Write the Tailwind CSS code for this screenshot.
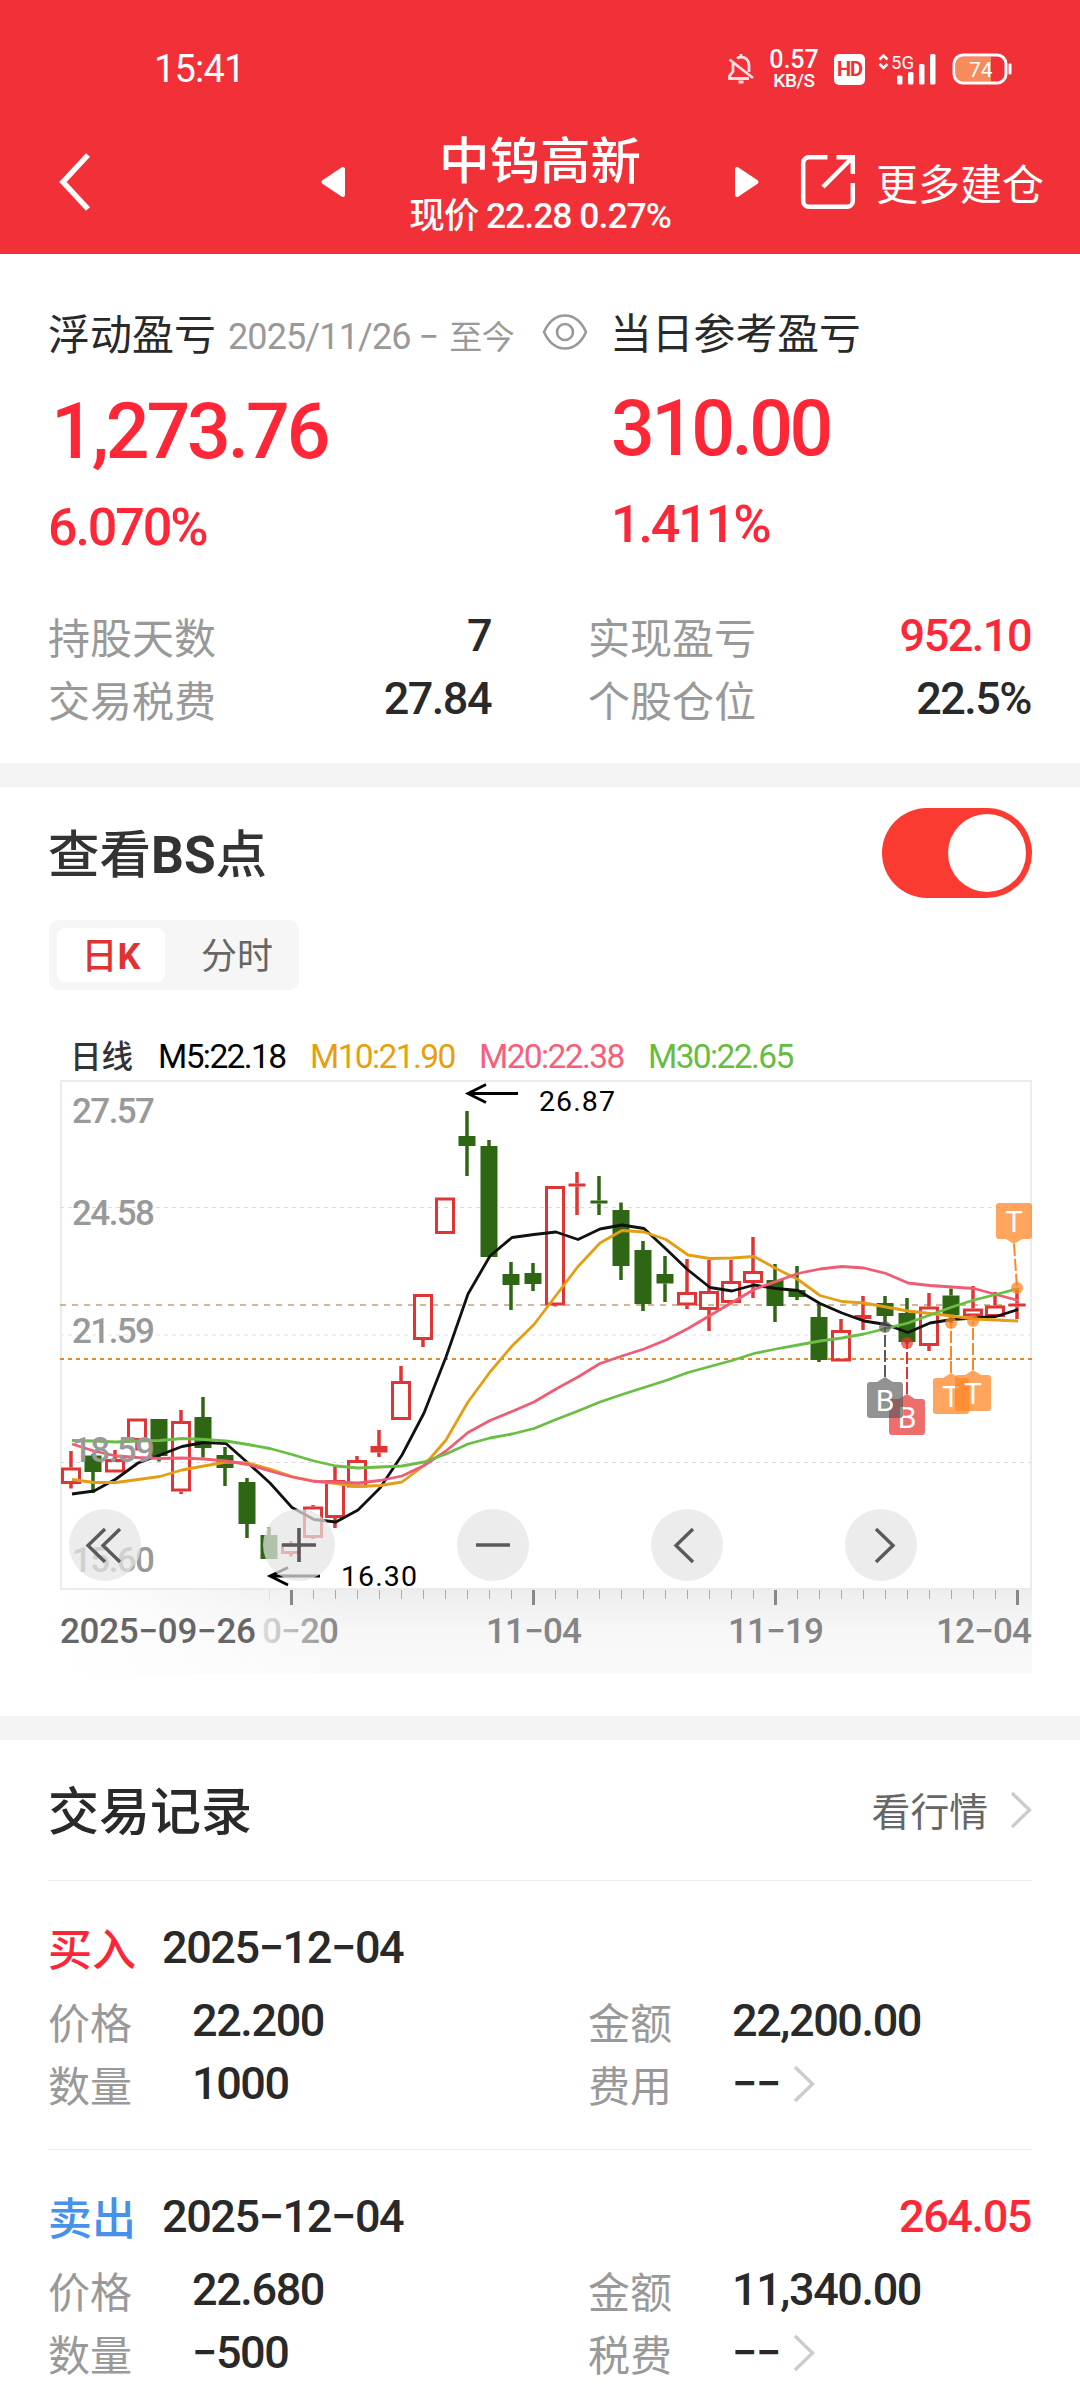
<!DOCTYPE html>
<html lang="zh-CN">
<head>
    <meta charset="UTF-8">
    <meta name="viewport" content="width=device-width, initial-scale=1.0">
    <title>中钨高新 - 持仓详情</title>
    <script src="https://cdn.jsdelivr.net/npm/@tailwindcss/browser@4"></script>
</head>
<body class="bg-white w-[1080px] h-[2400px] overflow-hidden leading-none text-[#292929] font-[Roboto,'Noto_Sans_CJK_SC',sans-serif]">
    <!-- Header -->
    <header class="bg-[#f13037] text-white h-[254px]">
        <!-- Status bar -->
        <div class="h-[110px] pt-[28px] flex">
            <div class="w-full h-[82px] flex items-center pl-[154px] pr-[68px]">
                <span class="text-[38px] tracking-[-0.8px]">15:41</span>
                <svg class="ml-auto" width="28" height="32" viewBox="0 0 28 32" fill="none" stroke="#fff" stroke-width="2.8" opacity=".85">
                    <path d="M10 5.5C11 4.5 12.500 4 14 4c5 0 8 3.500 8 8.500V19M6.500 9C6 10 6 11.500 6 13v5.500L2.500 23v2.500H22M14 1v3M2.500 6.500L26 25"/>
                    <path d="M11.500 29h5" stroke-width="3"/>
                </svg>
                <div class="ml-[13px] w-[52px] flex flex-col items-center font-medium">
                    <span class="text-[25px] leading-[20px] h-[21px]">0.57</span>
                    <span class="text-[19px] leading-[15px] h-[15px] mt-[2px] tracking-[-0.4px]">KB/S</span>
                </div>
                <span class="ml-[14px] w-[31px] h-[31px] rounded-[5px] bg-white text-[#f13037] text-[20px] font-bold flex items-center justify-center tracking-[-1px]">HD</span>
                <svg class="ml-[13px] overflow-visible" width="60" height="32" viewBox="0 0 60 32">
                    <path d="M1.500 6.500l4-4 4 4M1.500 11l4 4 4-4" fill="none" stroke="#fff" stroke-width="2.600"/>
                    <text x="13" y="16" font-size="19" fill="#fff" textLength="23" lengthAdjust="spacingAndGlyphs">5G</text>
                    <g fill="#fff">
                        <rect x="19" y="22.500" width="5.500" height="9" rx="1.500"/>
                        <rect x="30" y="19" width="5.500" height="12.500" rx="1.500"/>
                        <rect x="41" y="11" width="5.500" height="20.500" rx="1.500"/>
                        <rect x="52" y="1" width="5.500" height="30.500" rx="1.500"/>
                    </g>
                </svg>
                <svg class="ml-[14px]" width="60" height="32" viewBox="0 0 60 32">
                    <path d="M10 3.500h29v25H10a6 6 0 0 1-6-6v-13a6 6 0 0 1 6-6z" fill="#f88b5c"/>
                    <rect x="2" y="2" width="52" height="28" rx="9" fill="none" stroke="#fff" stroke-width="3"/>
                    <rect x="56.500" y="10.500" width="3" height="11" rx="1" fill="#fff"/>
                    <text x="17" y="23.500" font-size="21" fill="#fff">74</text>
                </svg>
            </div>
        </div>
        <!-- Title bar -->
        <div class="h-[144px] flex items-center">
            <svg class="ml-[58px]" width="34" height="60" viewBox="0 0 34 60" fill="none" stroke="#fff" stroke-width="5.500">
                <path d="M30 3L5 30l25 27"/>
            </svg>
            <svg class="ml-[228px]" width="26" height="32" viewBox="0 0 26 32" fill="#fff" stroke="#fff" stroke-width="4" stroke-linejoin="round">
                <path d="M3.500 16L23 3v26z"/>
            </svg>
            <div class="w-[388px] pt-[2px] flex flex-col items-center">
                <h1 class="text-[50.5px] font-medium font-['Noto_Sans_CJK_SC',sans-serif]">中钨高新</h1>
                <p class="mt-[16px] text-[35.5px] font-medium tracking-[-1px] whitespace-nowrap">现价 22.28 0.27%</p>
            </div>
            <svg width="26" height="32" viewBox="0 0 26 32" fill="#fff" stroke="#fff" stroke-width="4" stroke-linejoin="round">
                <path d="M22.500 16L3 3v26z"/>
            </svg>
            <svg class="ml-[40px]" width="56" height="56" viewBox="0 0 56 56" fill="none" stroke="#fff" stroke-width="4.500">
                <path d="M27.500 3.200H9A5.800 5.800 0 0 0 3.200 9v38A5.800 5.800 0 0 0 9 52.800h38a5.800 5.800 0 0 0 5.800-5.800V29M36.500 3.200h16.300V20M52 4L23 33"/>
            </svg>
            <span class="ml-[20px] text-[42px] whitespace-nowrap font-['Noto_Sans_CJK_SC',sans-serif]">更多建仓</span>
        </div>
    </header>

    <!-- Profit summary -->
    <section class="h-[509px] px-[48px] pt-[51px]">
        <div class="h-[54px] flex items-center">
            <span class="text-[42px] font-['Noto_Sans_CJK_SC',sans-serif]">浮动盈亏</span>
            <span class="ml-[12px] mt-[9px] w-[300px] text-[36px] tracking-[-0.9px] text-[#999] whitespace-nowrap">2025/11/26 − <span class="ml-[3px] text-[33px] tracking-[-0.5px]">至今</span></span>
            <svg class="ml-[14px]" width="46" height="38" viewBox="0 0 46 38" fill="none" stroke="#999" stroke-width="2.600">
                <path d="M2 19C7 8 14 2.500 23 2.500S39 8 44 19c-5 11-12 16.500-21 16.500S7 30 2 19z"/>
                <circle cx="23" cy="19" r="8"/>
            </svg>
            <span class="ml-[22px] text-[41.8px] font-['Noto_Sans_CJK_SC',sans-serif]">当日参考盈亏</span>
        </div>
        <div class="flex text-[#fe2737] font-medium">
            <div class="w-[563px]">
                <p class="mt-[35px] ml-[3px] text-[77px] tracking-[-3.1px]">1,273.76</p>
                <p class="mt-[31px] text-[52px] tracking-[-2.1px]">6.070%</p>
            </div>
            <div>
                <p class="mt-[32px] text-[77px] tracking-[-3.6px]">310.00</p>
                <p class="mt-[31px] text-[52px] tracking-[-2.1px]">1.411%</p>
            </div>
        </div>
        <div class="mt-[50px] grid grid-cols-[443px_443px] gap-x-[97px] text-[45px] font-medium tracking-[-1.5px]">
            <div class="h-[63px] flex items-center justify-between"><span class="text-[42px] font-normal tracking-normal text-[#999] font-['Noto_Sans_CJK_SC',sans-serif]">持股天数</span><span>7</span></div>
            <div class="h-[63px] flex items-center justify-between"><span class="text-[42px] font-normal tracking-normal text-[#999] font-['Noto_Sans_CJK_SC',sans-serif]">实现盈亏</span><span class="text-[#fe2737]">952.10</span></div>
            <div class="h-[63px] flex items-center justify-between"><span class="text-[42px] font-normal tracking-normal text-[#999] font-['Noto_Sans_CJK_SC',sans-serif]">交易税费</span><span>27.84</span></div>
            <div class="h-[63px] flex items-center justify-between"><span class="text-[42px] font-normal tracking-normal text-[#999] font-['Noto_Sans_CJK_SC',sans-serif]">个股仓位</span><span>22.5%</span></div>
        </div>
    </section>

    <div class="h-[24px] bg-[#f4f4f4]"></div>

    <!-- BS points and chart -->
    <section class="h-[929px] px-[48px]">
        <div class="h-[133px] pt-[21px] flex justify-between items-start">
            <h2 class="mt-[22px] text-[51.5px] font-medium text-[#333]">查看<span class="font-bold">BS</span>点</h2>
            <button class="w-[150px] h-[90px] rounded-full bg-[#fb3b32] p-[6px] flex justify-end">
                <span class="w-[78px] h-[78px] rounded-full bg-white"></span>
            </button>
        </div>
        <!-- Tabs -->
        <div class="ml-px w-[250px] h-[70px] p-[8px] rounded-[10px] bg-[#f6f6f6] flex items-center text-[36px]">
            <span class="w-[108px] h-[54px] pt-[4px] rounded-[8px] bg-white text-[#df3333] font-medium flex items-center justify-center">日<b>K</b></span>
            <span class="flex-1 pl-[18px] pt-[4px] text-center text-[#666]">分时</span>
        </div>
        <!-- Moving averages -->
        <div class="h-[90px] pt-[50px] pl-[22px] flex text-[33.5px] font-[450] tracking-[-1.6px] whitespace-nowrap">
            <span class="w-[88px] text-[31.5px] tracking-normal text-[#333] pt-[2px]">日线</span>
            <span class="w-[152px] text-black">M5:22.18</span>
            <span class="w-[169px] text-[#e69f0f]">M10:21.90</span>
            <span class="w-[169px] text-[#f8607a]">M20:22.38</span>
            <span class="text-[#66bd3f]">M30:22.65</span>
        </div>
        <!-- K line -->
        <div class="relative ml-[12px] w-[972px] h-[594px]">
            <svg id="kline" width="972" height="594" viewBox="60 1080 972 594" fill="none">
                <defs>
                    <linearGradient id="shade" x1="0" y1="0" x2="0" y2="1">
                        <stop offset="0" stop-color="#ededed"/>
                        <stop offset=".5" stop-color="#f7f7f7"/>
                        <stop offset="1" stop-color="#fafafa"/>
                    </linearGradient>
                    <linearGradient id="fade">
                        <stop offset="0" stop-color="#fff"/>
                        <stop offset="1" stop-color="#fff" stop-opacity="0"/>
                    </linearGradient>
                    <linearGradient id="ink">
                        <stop offset="0" stop-color="#ddd"/>
                        <stop offset="1" stop-color="#858585"/>
                    </linearGradient>
                </defs>
                <rect x="60" y="1589" width="972" height="85" fill="url(#shade)"/>
                <rect x="60" y="1589" width="290" height="85" fill="url(#fade)"/>
                <rect x="61" y="1081" width="970" height="508" stroke="#ebebeb" stroke-width="2"/>
                <path d="M60 1207.500H1031M60 1462.500H1031" stroke="#dcdcdc" stroke-dasharray="4 4"/>
                <path d="M60 1335H1031" stroke="#ebebeb" stroke-width="1.500" stroke-dasharray="4 4"/>
                <path d="M60 1305H1031" stroke="#c4a26c" stroke-width="1.600" stroke-dasharray="6 6"/>
                <path d="M60 1359H1032" stroke="#e8872e" stroke-width="1.800" stroke-dasharray="4 4"/>
                <g id="candles"></g>
                <g id="averages" stroke-width="2.800" stroke-linejoin="round"></g>
                <g font-size="35" font-weight="500" fill="#999">
                    <text x="72" y="1122.500" textLength="83">27.57</text>
                    <text x="72" y="1224.500" textLength="83">24.58</text>
                    <text x="72" y="1342.500" textLength="83">21.59</text>
                    <text x="72" y="1461.500" textLength="83">18.59</text>
                    <text x="72" y="1571.500" textLength="83">15.60</text>
                </g>
                <path d="M518 1093.500H468M486 1084.500L468 1093.500l18 9M320 1576H270M288 1567.500L270 1576l18 9" stroke="#000" stroke-width="2.800"/>
                <g font-size="28.500" fill="#000">
                    <text x="539" y="1110.500" textLength="76">26.87</text>
                    <text x="341" y="1585.500" textLength="76">16.30</text>
                </g>
                <g id="ticks"></g>
                <g font-size="35" fill="#858585" font-weight="500">
                    <text x="60" y="1643" fill="#666" textLength="196">2025−09−26</text>
                    <text x="262" y="1643" fill="url(#ink)" textLength="77">0−20</text>
                    <text x="486" y="1643" textLength="96">11−04</text>
                    <text x="728" y="1643" textLength="96">11−19</text>
                    <text x="936" y="1643" textLength="96">12−04</text>
                </g>
                <g id="marks" font-size="30" text-anchor="middle"></g>
            </svg>
            <!-- Chart controls -->
            <div class="absolute left-[9px] top-[429px] flex gap-[122px]">
                <button class="w-[72px] h-[72px] rounded-full bg-[#e5e5e5]/72"><svg viewBox="0 0 72 72" fill="none" stroke="#5a5a5a" stroke-width="3.400"><path d="M36 20L19 36.500 36 53M51 20L34 36.500 51 53"/></svg></button>
                <button class="w-[72px] h-[72px] rounded-full bg-[#e5e5e5]/72"><svg viewBox="0 0 72 72" fill="none" stroke="#5a5a5a" stroke-width="3.600"><path d="M19 36h34M36 19v34"/></svg></button>
                <button class="w-[72px] h-[72px] rounded-full bg-[#e5e5e5]/72"><svg viewBox="0 0 72 72" fill="none" stroke="#5a5a5a" stroke-width="3.400"><path d="M19 36h34"/></svg></button>
                <button class="w-[72px] h-[72px] rounded-full bg-[#e5e5e5]/72"><svg viewBox="0 0 72 72" fill="none" stroke="#5a5a5a" stroke-width="3.400"><path d="M42 20L25 36.500 42 53"/></svg></button>
                <button class="w-[72px] h-[72px] rounded-full bg-[#e5e5e5]/72"><svg viewBox="0 0 72 72" fill="none" stroke="#5a5a5a" stroke-width="3.400"><path d="M31 20l17 16.500L31 53"/></svg></button>
            </div>
        </div>
    </section>

    <div class="h-[24px] bg-[#f4f4f4]"></div>

    <!-- Trade records -->
    <section class="px-[48px]">
        <div class="h-[141px] border-b border-[#ececec] flex items-center">
            <h2 class="-mt-[3px] text-[51px] font-medium font-['Noto_Sans_CJK_SC',sans-serif]">交易记录</h2>
            <span class="ml-auto -mt-[2px] text-[38.8px] text-[#666] font-['Noto_Sans_CJK_SC',sans-serif]">看行情</span>
            <svg class="ml-[22px]" width="22" height="38" viewBox="0 0 22 38" fill="none" stroke="#ccc" stroke-width="3.400"><path d="M2 2l17.500 17L2 36"/></svg>
        </div>

        <div class="h-[269px] pt-[34px] border-b border-[#ececec] text-[45px] font-medium tracking-[-1.4px]">
            <div class="h-[64px] flex items-center">
                <span class="w-[114px] text-[44px] tracking-normal text-[#fb2638] font-['Noto_Sans_CJK_SC',sans-serif]">买入</span>
                <span>2025−12−04</span>
            </div>
            <div class="mt-[10px] grid grid-cols-[144px_396px_144px_1fr]">
                <span class="h-[63px] flex items-center text-[42px] font-normal tracking-normal text-[#999] font-['Noto_Sans_CJK_SC',sans-serif]">价格</span>
                <span class="h-[63px] flex items-center">22.200</span>
                <span class="h-[63px] flex items-center text-[42px] font-normal tracking-normal text-[#999] font-['Noto_Sans_CJK_SC',sans-serif]">金额</span>
                <span class="h-[63px] flex items-center">22,200.00</span>
                <span class="h-[63px] flex items-center text-[42px] font-normal tracking-normal text-[#999] font-['Noto_Sans_CJK_SC',sans-serif]">数量</span>
                <span class="h-[63px] flex items-center">1000</span>
                <span class="h-[63px] flex items-center text-[42px] font-normal tracking-normal text-[#999] font-['Noto_Sans_CJK_SC',sans-serif]">费用</span>
                <span class="h-[63px] flex items-center gap-[13px]">−−<svg width="22" height="38" viewBox="0 0 22 38" fill="none" stroke="#ccc" stroke-width="3.400"><path d="M2 2l17.500 17L2 36"/></svg></span>
            </div>
        </div>

        <div class="h-[269px] pt-[34px] text-[45px] font-medium tracking-[-1.4px]">
            <div class="h-[64px] flex items-center">
                <span class="w-[114px] text-[44px] tracking-normal text-[#4791ea] font-['Noto_Sans_CJK_SC',sans-serif]">卖出</span>
                <span>2025−12−04</span>
                <span class="ml-auto mr-px text-[#fe2737]">264.05</span>
            </div>
            <div class="mt-[10px] grid grid-cols-[144px_396px_144px_1fr]">
                <span class="h-[63px] flex items-center text-[42px] font-normal tracking-normal text-[#999] font-['Noto_Sans_CJK_SC',sans-serif]">价格</span>
                <span class="h-[63px] flex items-center">22.680</span>
                <span class="h-[63px] flex items-center text-[42px] font-normal tracking-normal text-[#999] font-['Noto_Sans_CJK_SC',sans-serif]">金额</span>
                <span class="h-[63px] flex items-center">11,340.00</span>
                <span class="h-[63px] flex items-center text-[42px] font-normal tracking-normal text-[#999] font-['Noto_Sans_CJK_SC',sans-serif]">数量</span>
                <span class="h-[63px] flex items-center">−500</span>
                <span class="h-[63px] flex items-center text-[42px] font-normal tracking-normal text-[#999] font-['Noto_Sans_CJK_SC',sans-serif]">税费</span>
                <span class="h-[63px] flex items-center gap-[13px]">−−<svg width="22" height="38" viewBox="0 0 22 38" fill="none" stroke="#ccc" stroke-width="3.400"><path d="M2 2l17.500 17L2 36"/></svg></span>
            </div>
        </div>
    </section>

    <script>
        const x = i => 71 + 22 * i;

        // [up, wick top, body top, body bottom, wick bottom]
        const candles = [
            [1, 1451, 1467.5, 1484, 1488.5], [0, 1454, 1455.5, 1472, 1493], [1, 1450, 1459, 1472.5, 1472.5], [1, 1418.5, 1418.5, 1441, 1450.5],
            [0, 1419, 1419, 1456, 1461.5], [1, 1410, 1421, 1491.5, 1494], [0, 1397, 1417, 1448, 1457.5], [0, 1447, 1455, 1468, 1486],
            [0, 1478, 1482, 1524, 1538], [0, 1527, 1535, 1559, 1559], [1, 1541, 1543.5, 1554, 1556.5], [1, 1505, 1506.5, 1538, 1539],
            [1, 1466.5, 1480, 1518, 1528], [1, 1456, 1460, 1487.5, 1487.5], [1, 1430, 1446, 1452.5, 1457], [1, 1366, 1381, 1420, 1420],
            [1, 1294, 1294, 1340, 1347], [1, 1197.5, 1197.5, 1234, 1234], [0, 1111, 1136, 1146, 1176], [0, 1140, 1146, 1257, 1257],
            [0, 1262, 1274, 1285, 1310], [0, 1263, 1273, 1284, 1291], [1, 1186, 1186, 1305.5, 1306.5], [1, 1172, 1183.5, 1186.5, 1215],
            [0, 1176, 1200.5, 1203.5, 1215], [0, 1202.5, 1210, 1266, 1280], [0, 1241, 1250, 1304, 1311], [0, 1256, 1274, 1283.5, 1302],
            [1, 1259, 1292, 1305.5, 1309], [1, 1260, 1291, 1310, 1331], [1, 1260, 1281, 1303, 1303], [1, 1237, 1271, 1283, 1298],
            [0, 1264, 1280, 1306, 1322], [0, 1266, 1290, 1297, 1300], [0, 1303, 1317, 1360, 1362], [1, 1319, 1330, 1361.5, 1361.5],
            [1, 1296, 1315, 1319, 1330], [0, 1296, 1303, 1316, 1325], [0, 1298, 1313, 1342, 1344], [1, 1293, 1306.5, 1346, 1351],
            [0, 1288.5, 1295.5, 1315, 1323], [1, 1286, 1308.5, 1316.5, 1316.5], [1, 1292, 1305.5, 1317, 1317], [1, 1288, 1303.5, 1306.5, 1319]
        ];
        document.getElementById('candles').innerHTML = candles.map(([up, hi, top, bot, lo], i) => {
            const c = up ? '#df3535' : '#2f6613';
            const hollow = up && bot - top > 7;
            const wick = `<path d="M${x(i)} ${hi}V${top}M${x(i)} ${bot}V${lo}" stroke="${c}" stroke-width="3.5"/>`;
            return wick + (hollow
                ? `<rect x="${x(i) - 8.5}" y="${top + 1.5}" width="17" height="${bot - top - 3}" stroke="${c}" stroke-width="3"/>`
                : `<rect x="${x(i) - 8.5}" y="${top}" width="17" height="${bot - top}" fill="${c}"/>`);
        }).join('');

        const averages = {
            '#111': [1494, 1491, 1479, 1463, 1455, 1446.5, 1442.5, 1443.5, 1463, 1483, 1507.5, 1519.5, 1522, 1510, 1488, 1455, 1413, 1357, 1294, 1256, 1237.5, 1234.5, 1232, 1239.5, 1229, 1225, 1228.5, 1249, 1270, 1287.5, 1291, 1285, 1288.5, 1290.5, 1303.5, 1313, 1321, 1324.5, 1332.5, 1323, 1319.5, 1318, 1316.5, 1309.5],
            '#e59e14': [1479.5, 1482.5, 1482.5, 1479.5, 1476.5, 1470, 1466, 1462, 1463, 1469, 1476.5, 1481, 1483.5, 1486.5, 1485.5, 1482, 1465.5, 1440, 1402, 1372, 1346, 1324.5, 1295.5, 1266.5, 1243, 1230.5, 1232, 1239.5, 1255, 1258.5, 1258, 1256.5, 1268.5, 1279.5, 1295.5, 1301.5, 1303, 1307, 1311, 1313.5, 1316, 1319, 1320, 1321],
            '#f05c74': [1444, 1451, 1456, 1457.5, 1458.5, 1458, 1459, 1461, 1464.5, 1471, 1477, 1481.5, 1482, 1483, 1480.5, 1476, 1465.5, 1451, 1432.5, 1420.5, 1411.5, 1402, 1389, 1377, 1363.5, 1356, 1349, 1340, 1328.5, 1315.5, 1302.5, 1289.5, 1281.5, 1273.5, 1269, 1266.5, 1268, 1273.5, 1283, 1285.5, 1287, 1288.5, 1294.5, 1300.5],
            '#6abd45': [1440.5, 1441, 1442, 1441, 1440.5, 1438.5, 1439.5, 1441, 1444.5, 1448.5, 1454.5, 1461, 1466, 1468, 1467, 1466, 1462, 1454, 1444, 1438, 1434, 1428.5, 1419.5, 1411, 1402, 1394.5, 1387.5, 1380.5, 1372.5, 1366.5, 1360.5, 1353.5, 1349, 1345, 1341, 1338, 1334, 1328.5, 1323, 1315, 1307, 1300, 1294.5, 1288.5]
        };
        document.getElementById('averages').innerHTML = Object.entries(averages).map(([c, ys]) =>
            `<polyline stroke="${c}" points="${ys.map((y, i) => `${x(i) + 1},${y}`).join(' ')}"/>`).join('');

        let ticks = '';
        for (let i = 9; i < 44; i++) {
            const big = (i - 10) % 11 === 0;
            ticks += `<path d="M${x(i) + 0.5} 1590V${big ? 1605 : 1599}" stroke="${i === 9 ? '#ddd' : big ? '#888' : '#aaa'}" stroke-width="${big ? 3 : 1}"/>`;
        }
        document.getElementById('ticks').innerHTML = ticks;

        // Buy (B) and T trade marks: [label, color, opacity, x, box top, dot x, dot y]
        const marks = [
            ['B', '#e83232', 0.7, 907, 1399, 907, 1343],
            ['B', '#5a5a5a', 0.66, 885, 1382, 885, 1327],
            ['T', '#ff8625', 0.74, 951, 1378, 951, 1323],
            ['T', '#ff8625', 0.74, 973, 1375, 973, 1321],
            ['T', '#ff8625', 0.74, 1014, 1203, 1017, 1288]
        ];
        document.getElementById('marks').innerHTML = marks.map(([t, c, o, cx, y, dx, dy]) => {
            const above = y < dy;
            const edge = above ? y + 36 : y;
            const tip = above ? edge + 5 : edge - 5;
            return `<path d="M${cx} ${tip}L${dx} ${dy}" stroke="${c}" stroke-width="2" stroke-dasharray="12 3"/>
                <circle cx="${dx}" cy="${dy}" r="6" fill="${c}" opacity="${o}"/>
                <g opacity="${o}" fill="${c}"><rect x="${cx - 18}" y="${y}" width="36" height="36" rx="3"/><path d="M${cx - 8} ${edge}L${cx} ${tip}L${cx + 8} ${edge}z"/></g>
                <text x="${cx}" y="${y + 29}" fill="#fff">${t}</text>`;
        }).join('');
    </script>
</body>
</html>
